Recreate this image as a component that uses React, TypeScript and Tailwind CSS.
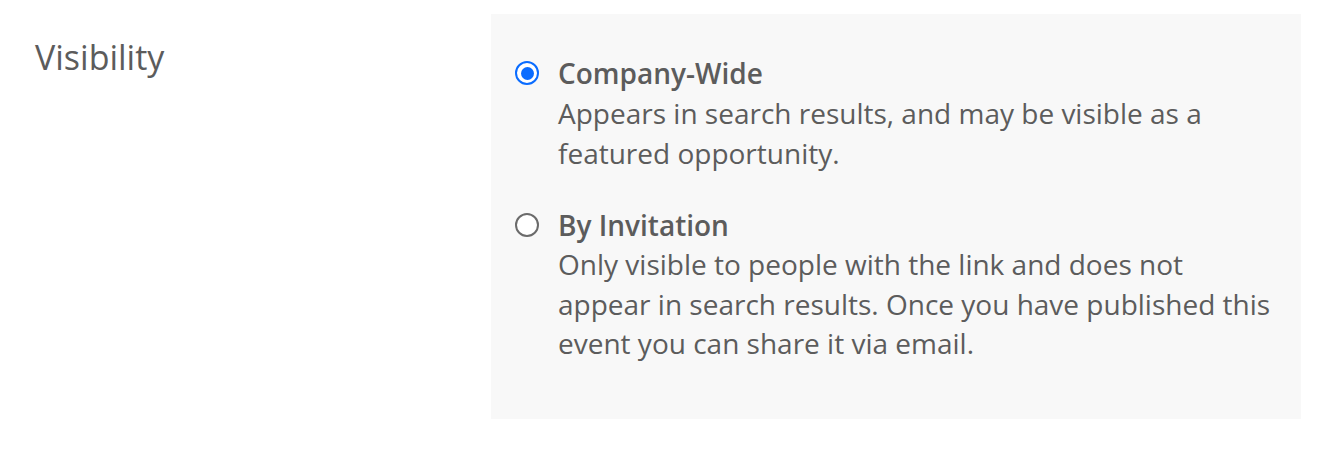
export default function App() {
  return (
    <div
      className="min-h-screen bg-white text-[#5c5c5c]"
      style={{ fontFamily: '"Open Sans", "Noto Sans", sans-serif' }}
    >
      <div className="flex pt-[14px]">
        <div className="w-[491px] shrink-0 pl-[35px] pt-[20px]">
          <h2 className="text-[34px] leading-[46px]">Visibility</h2>
        </div>
        <div className="w-[810px] bg-[#f8f8f8] pl-[24px] pr-[24px] pt-[39px] pb-[55px]">
          <label className="flex gap-[19px]">
            <span className="mt-[8px] flex h-[24px] w-[24px] shrink-0 items-center justify-center rounded-full border-2 border-[#0a6cff] bg-white">
              <span className="h-[13px] w-[13px] rounded-full bg-[#0a6cff]" />
            </span>
            <span className="flex flex-col">
              <span className="text-[28px] font-semibold leading-[40px]">Company-Wide</span>
              <span className="text-[28px] leading-[40px]">
                Appears in search results, and may be visible as a featured opportunity.
              </span>
            </span>
          </label>
          <label className="mt-[32px] flex gap-[19px]">
            <span className="mt-[8px] h-[24px] w-[24px] shrink-0 rounded-full border-2 border-[#6b6b6b] bg-white" />
            <span className="flex flex-col">
              <span className="text-[28px] font-semibold leading-[40px]">By Invitation</span>
              <span className="text-[28px] leading-[39.5px]">
                Only visible to people with the link and does not appear in search results. Once you have published this event you can share it via email.
              </span>
            </span>
          </label>
        </div>
      </div>
    </div>
  );
}
